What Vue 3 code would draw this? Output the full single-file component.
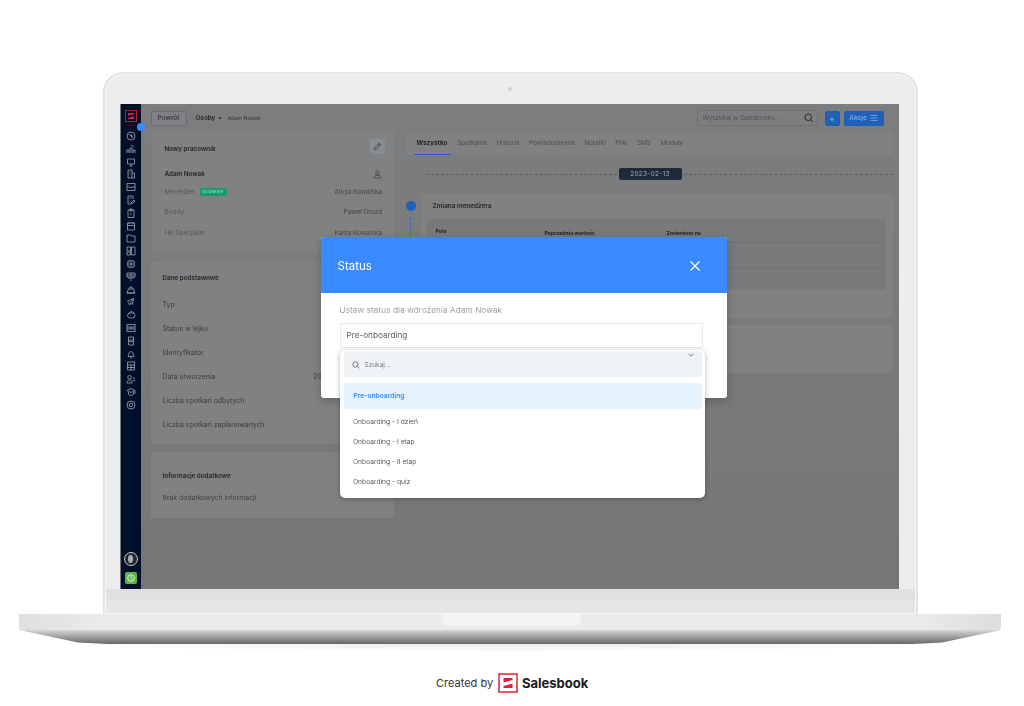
<script setup>
const navIcons = [
  'M5 1a4 4 0 1 0 0 8 4 4 0 0 0 0-8M3 3l4 4M5 3v2h2',
  'M1 9V6h2v3M4 9V4h2v5M7 9V6h2v3M5 1l3 2',
  'M1.5 2h7v5h-7zM5 7v2M3.5 9h3',
  'M2 1h4v8H2zM6 4h2.5v5H6M3.5 3h1M3.5 5h1',
  'M1 1.5h8v7H1zM1 5h3l1 1 1-1h3',
  'M2 1h5v3M2 1v8h3M6 9l3-3-1-1-3 3zM3.5 3h2',
  'M2 2h6v7.500H2zM4 1h2v2H4zM4 6h2',
  'M1.500 2h7v7h-7zM1.500 4.500h7M3 1v2M7 1v2',
  'M1 2h3l1 1h4v6H1z',
  'M1 1h3.500v4H1zM5.500 1H9v8H5.500zM1 6h3.500v3H1z',
  'M2 2h6v6H2zM1 4h1M8 4h1M1 6h1M8 6h1M4 1v1M6 1v1M4 8v1M6 8v1M4 4h2v2H4z',
  'M1 1h8v4H1zM5 1v8M1 3h8M3 5v2M7 5v2',
  'M1 8l1.500-4h5L9 8zM3 4l1-2h2l1 2M1 8h8',
  'M1.500 4l6-2.500-1 6-2-1.500-1 2-1-2.500zM4.500 5.500l3-4',
  'M1.500 6a3 3 0 0 1 3-3h2a2.500 2.500 0 0 1 0 5h-2a3 3 0 0 1-3-2M3 3a3 3 0 0 1 5 0',
  'M1 1.500h8v7H1zM1 4h8M1 6h8M3.500 5h3',
  'M2.500 1h5v3h-5zM2.500 5.500h5v3.500h-5zM2.500 4v1.500M7.500 4v1.500',
  'M2 7.500c1-1 .5-5 3-5s2 4 3 5zM4 9h2',
  'M1.500 1h7v8h-7zM1.500 4h7M1.500 6.500h7M5 4v5',
  'M3.500 1.500a1.800 1.800 0 1 0 .1 3.600 1.800 1.800 0 0 0-.1-3.600M1 9c0-2 1-3 2.500-3S6 7 6 9zM7 4h2M7 6.500h2',
  'M1 3.500l4-2 4 2-4 2zM2.500 5v2.500c1.500 1 3.500 1 5 0V5M9 3.500V7',
  'M5 3.200a1.800 1.800 0 1 0 0 3.600 1.800 1.800 0 0 0 0-3.600M5 1a4 4 0 1 0 0 8 4 4 0 0 0 0-8'
]
const tabs = ['Spotkania', 'Historia', 'Powiadomienia', 'Notatki', 'Pliki', 'SMS', 'Moduły']
const people = [
  { label: 'Buddy', value: 'Paweł Drozd' },
  { label: 'HR Specjalist', value: 'Kasia Kowalska' }
]
const basics = [
  { label: 'Typ', value: '' },
  { label: 'Status w lejku', value: '' },
  { label: 'Identyfikator', value: '' },
  { label: 'Data utworzenia', value: '2023-02-13 10:24:00' },
  { label: 'Liczba spotkań odbytych', value: '' },
  { label: 'Liczba spotkań zaplanowanych', value: '' }
]
const options = ['Onboarding - I dzień', 'Onboarding - I etap', 'Onboarding - II etap', 'Onboarding - quiz']
</script>

<template>
  <div class="page">
    <div class="laptop">
      <div class="lid">
        <span class="camera"></span>
        <div class="screen">
          <aside class="sidebar">
            <svg class="logo" viewBox="0 0 12 12">
              <rect x=".5" y=".5" width="11" height="11" fill="#00102a" stroke="#c2182b" />
              <path d="M3 3H9V4.300L3 5.800zM9 6.200V9H3V7.700z" fill="#d8203a" />
            </svg>
            <span class="collapse"></span>
            <div class="nav">
              <svg v-for="(d, i) in navIcons" :key="i" class="nav-icon" viewBox="0 0 10 10">
                <path :d="d" fill="none" stroke="#9ea4ad" stroke-width=".8" />
              </svg>
            </div>
            <div class="avatar"><span class="avatar-head"></span></div>
            <div class="clock">
              <svg class="clock-icon" viewBox="0 0 12 12" width="12" height="12">
                <circle cx="6" cy="6" r="3.300" fill="none" stroke="#e4f5da" stroke-width="1" />
                <path d="M6 4v2.200l1.300.8" fill="none" stroke="#e4f5da" stroke-width=".8" />
              </svg>
            </div>
          </aside>

          <main class="main">
            <header class="topbar">
              <button class="back">Powrót</button>
              <b class="crumb">Osoby</b>
              <span class="crumb-dot"></span>
              <span class="crumb-sub">Adam Nowak</span>
              <div class="search">
                <span>Wyszukaj w Salesbooku...</span>
                <svg viewBox="0 0 10 10" width="10" height="10">
                  <circle cx="4.300" cy="4.300" r="3.300" fill="none" stroke="#26282b" stroke-width="1" />
                  <path d="M6.800 6.800 9.200 9.200" stroke="#26282b" stroke-width="1" />
                </svg>
              </div>
              <button class="primary plus">+</button>
              <button class="primary actions">
                Akcje
                <svg viewBox="0 0 8 8" width="8" height="8">
                  <path d="M.5 1.500h7M.5 4h7M.5 6.500h7" stroke="#6f9bd8" stroke-width="1" />
                </svg>
              </button>
            </header>

            <div class="body">
              <div class="left">
                <section class="card c1">
                  <div class="c1-head">
                    <b class="title">Nowy pracownik</b>
                    <span class="edit">
                      <svg viewBox="0 0 10 10" width="9" height="9">
                        <path d="M1.500 8.500 2 6.200 6.800 1.400l1.800 1.800L3.800 8zM5.800 2.400l1.800 1.800" fill="none" stroke="#2b2d30" stroke-width=".8" />
                      </svg>
                    </span>
                  </div>
                  <div class="person">
                    <b class="title">Adam Nowak</b>
                    <svg viewBox="0 0 10 10" width="9" height="9">
                      <circle cx="5" cy="3" r="2" fill="none" stroke="#3d3f42" stroke-width=".9" />
                      <path d="M1.500 9V8c0-1.300 1-2 2-2h3c1 0 2 .7 2 2v1z" fill="none" stroke="#3d3f42" stroke-width=".9" />
                    </svg>
                  </div>
                  <div class="kv first">
                    <span class="muted">Menedżer</span>
                    <span class="tag">GŁÓWNY</span>
                    <span class="value">Alicja Kowalska</span>
                  </div>
                  <div v-for="p in people" :key="p.label" class="kv">
                    <span class="muted">{{ p.label }}</span>
                    <span class="value">{{ p.value }}</span>
                  </div>
                </section>

                <section class="card c2">
                  <b class="title">Dane podstawowe</b>
                  <div class="rows">
                    <div v-for="r in basics" :key="r.label" class="basic">
                      <span>{{ r.label }}</span>
                      <span class="basic-val">{{ r.value }}</span>
                    </div>
                  </div>
                </section>

                <section class="card c3">
                  <b class="title">Informacje dodatkowe</b>
                  <p class="none">Brak dodatkowych informacji</p>
                </section>
              </div>

              <div class="right">
                <nav class="tabs">
                  <span class="tab active">Wszystko</span>
                  <span v-for="t in tabs" :key="t" class="tab">{{ t }}</span>
                </nav>
                <div class="date-row">
                  <i class="dash dash-left"></i>
                  <span class="date">2023-02-13</span>
                  <i class="dash"></i>
                </div>
                <div class="timeline">
                  <div class="rail">
                    <span class="dot"></span>
                    <span class="dots"></span>
                  </div>
                  <div class="events">
                    <section class="event e1">
                      <b class="event-title">Zmiana menedżera</b>
                      <div class="table">
                        <div class="thead">
                          <b class="th-first">Pole</b>
                          <b>Poprzednia wartość</b>
                          <b>Zmieniono na</b>
                        </div>
                        <div class="tr"></div>
                        <div class="tr last"></div>
                      </div>
                    </section>
                    <section class="event e2"></section>
                  </div>
                </div>
              </div>
            </div>
          </main>

          <div class="modal">
            <div class="modal-head">
              <span>Status</span>
              <svg viewBox="0 0 10 10" width="10" height="10">
                <path d="M.5.5l9 9M9.500.5l-9 9" stroke="#fff" stroke-width="1.300" />
              </svg>
            </div>
            <div class="modal-body">
              <p class="hint">Ustaw status dla wdrożenia Adam Nowak</p>
              <div class="select">Pre-onboarding</div>
            </div>
            <div class="dropdown">
              <div class="dd-search">
                <svg viewBox="0 0 10 10" width="8" height="8">
                  <circle cx="4.300" cy="4.300" r="3.300" fill="none" stroke="#5f6670" stroke-width="1.100" />
                  <path d="M6.800 6.800 9.200 9.200" stroke="#5f6670" stroke-width="1.100" />
                </svg>
                <span>Szukaj...</span>
              </div>
              <svg class="chevron" viewBox="0 0 8 5" width="6" height="4">
                <path d="M.8.8 4 4 7.200.8" fill="none" stroke="#5f6670" stroke-width="1.100" />
              </svg>
              <div class="dd-selected">Pre-onboarding</div>
              <div v-for="o in options" :key="o" class="dd-option">{{ o }}</div>
            </div>
          </div>
        </div>
      </div>
      <div class="base"><span class="notch"></span></div>
      <div class="base-under"></div>
      <div class="base-shadow"></div>
    </div>

    <footer class="footer">
      <span class="created">Created by</span>
      <svg class="brand-mark" viewBox="0 0 20 20" width="20" height="20">
        <rect x="1" y="1" width="18" height="18" fill="#fff" stroke="#de2335" stroke-width="1.500" />
        <path d="M5.500 5H14.500V7L5.500 9.500zM14.500 10.500V15H5.500V13z" fill="#de2335" />
      </svg>
      <b class="brand">Salesbook</b>
    </footer>
  </div>
</template>

<style>
html, body { margin: 0; background: #fff; }
</style>

<style scoped>
* { box-sizing: border-box; }
p { margin: 0; }
button { font-family: inherit; padding: 0; cursor: pointer; }

.page {
  width: 1024px;
  height: 706px;
  overflow: hidden;
  padding-top: 72px;
  background: #fff;
  font-family: Inter, "Liberation Sans", sans-serif;
  color: #37393c;
}
.laptop { display: flex; flex-direction: column; align-items: center; width: 1020px; }

.lid {
  position: relative;
  flex: none;
  width: 815px;
  height: 542px;
  padding: 30px 15px 0;
  border: 2px solid #e3e4e6;
  border-bottom: 0;
  border-radius: 20px 20px 0 0;
  background: linear-gradient(#ecedef 0 515px, #dfe0e1 515px 526px, #e4e5e6 526px);
  box-shadow: inset 0 0 0 1px #f7f7f8;
}
.camera {
  position: absolute;
  top: 13px;
  left: 403px;
  width: 4px;
  height: 4px;
  border-radius: 50%;
  background: #cfd2d6;
}
.screen {
  position: relative;
  display: flex;
  width: 779px;
  height: 485px;
  background: #78797b;
  filter: blur(.3px);
}

.sidebar {
  position: relative;
  display: flex;
  flex: none;
  flex-direction: column;
  align-items: center;
  width: 20px;
  margin-left: 1px;
  padding-top: 6px;
  background: #00102a;
}
.logo { width: 12px; height: 12px; flex: none; }
.collapse {
  position: absolute;
  top: 19px;
  right: -4px;
  z-index: 2;
  width: 8px;
  height: 8px;
  border-radius: 50%;
  background: #3a8bff;
}
.nav {
  display: flex;
  flex-direction: column;
  gap: 2.800px;
  margin-top: 9px;
}
.nav-icon { display: block; width: 10px; height: 10px; }
.avatar {
  display: flex;
  align-items: center;
  justify-content: center;
  width: 14px;
  height: 14px;
  margin-top: auto;
  border: 1px solid #c9cbce;
  border-radius: 50%;
  background: #25282c;
}
.avatar-head { width: 5px; height: 8px; border-radius: 50%; background: #a9acb0; }
.clock {
  width: 12px;
  height: 12px;
  margin: 6px 0 5px;
  border-radius: 2px;
  background: #5db549;
}
.clock-icon { display: block; }

.main {
  flex: 1;
  display: flex;
  flex-direction: column;
  min-width: 0;
  padding: 6px 6px 0 10px;
  background: linear-gradient(#7c7d7f, #757678);
}
.topbar {
  display: flex;
  align-items: center;
  height: 16px;
  margin-bottom: 4px;
  padding-right: 9px;
}
.back {
  width: 36px;
  height: 15px;
  border: 1px solid #6b6d70;
  border-radius: 2px;
  background: #808184;
  color: #2e3033;
  font-size: 6.500px;
  font-weight: 500;
}
.crumb { margin-left: 9px; font-size: 6.300px; font-weight: 700; color: #2b2d30; }
.crumb-dot {
  width: 2px;
  height: 2px;
  margin: 0 6px 0 4px;
  border-radius: 50%;
  background: #232527;
}
.crumb-sub { font-size: 5.300px; color: #37393c; }
.search {
  display: flex;
  align-items: center;
  justify-content: space-between;
  width: 121px;
  height: 16px;
  margin-left: auto;
  padding: 0 3px 0 5px;
  border: 1px solid #6f7073;
  border-radius: 2px;
  background: #7d7e80;
  color: #4d4f52;
  font-size: 6.300px;
}
.primary {
  height: 15px;
  border: 1px solid #1e5db3;
  border-radius: 2px;
  background: #1f60b8;
  color: #7ea6de;
}
.plus { width: 15px; margin-left: 7px; font-size: 10px; line-height: 12px; }
.actions {
  display: flex;
  align-items: center;
  justify-content: center;
  gap: 3px;
  width: 40px;
  margin-left: 4px;
  font-size: 6.500px;
  font-weight: 600;
}

.body { display: flex; flex: 1; min-height: 0; }
.left {
  display: flex;
  flex: none;
  flex-direction: column;
  gap: 8px;
  width: 243px;
}
.card { background: #808182; border-radius: 2px; }
.title { display: block; font-size: 6.250px; font-weight: 700; line-height: 10px; color: #2b2d30; }
.c1 { width: 242px; height: 123px; margin-left: 1px; padding: 9px 8.500px 0 13px; }
.c1-head { display: flex; align-items: center; justify-content: space-between; height: 15px; }
.c1-head .title { margin-top: 5px; }
.edit {
  display: flex;
  align-items: center;
  justify-content: center;
  width: 15px;
  height: 15px;
  border-radius: 2px;
  background: #888d93;
}
.person {
  display: flex;
  align-items: center;
  justify-content: space-between;
  height: 10px;
  margin-top: 15px;
  padding-right: 3px;
}
.kv {
  display: flex;
  align-items: center;
  height: 21px;
  padding-right: 3px;
  font-size: 6.500px;
}
.kv.first { height: 14px; margin-top: 6px; margin-bottom: 2px; }
.muted { color: #54565a; }
.value { margin-left: auto; color: #44464a; }
.tag {
  margin-left: 4px;
  padding: 0 2.500px;
  border-radius: 1px;
  background: #1c9a6e;
  color: #7fd8b6;
  font-size: 4px;
  font-weight: 700;
  letter-spacing: .6px;
  line-height: 8px;
}
.c2 { height: 183px; padding: 12px 11px 0 12px; }
.rows { margin-top: 9px; }
.basic {
  display: flex;
  align-items: center;
  justify-content: space-between;
  height: 24px;
  font-size: 6.900px;
  color: #3a3c3f;
}
.basic-val { white-space: nowrap; }
.c3 { height: 66px; padding: 19px 0 0 12px; }
.none { margin-top: 12px; font-size: 6.850px; line-height: 10px; color: #3f4144; }

.right { flex: 1; min-width: 0; padding-left: 12px; padding-top: 2px; }
.tabs {
  display: flex;
  align-items: center;
  gap: 9.500px;
  height: 23px;
  padding-left: 11px;
  background: #808182;
  border-radius: 2px;
  font-size: 6.400px;
  color: #4b4d50;
}
.tab { position: relative; line-height: 23px; }
.tab.active { color: #232528; font-weight: 700; }
.tab.active::after {
  content: "";
  position: absolute;
  left: -3px;
  right: -4px;
  bottom: 0;
  height: 1px;
  background: #1f60b8;
}
.date-row {
  display: flex;
  align-items: center;
  gap: 2px;
  height: 12px;
  margin: 13px 0 14px 20px;
}
.dash { flex: 1; border-top: 1px dashed #5d5f62; }
.dash-left { flex: none; width: 191px; }
.date {
  flex: none;
  width: 63px;
  height: 12px;
  border-radius: 2px;
  background: #1e2a39;
  color: #a9adb3;
  font-size: 6.500px;
  line-height: 12px;
  text-align: center;
  letter-spacing: .3px;
}
.timeline { display: flex; }
.rail { display: flex; flex: none; flex-direction: column; width: 15px; padding-top: 7px; }
.dot { width: 10px; height: 10px; border-radius: 50%; background: #1f60b8; }
.dots { width: 0; height: 60px; margin: 7px 0 0 4px; border-left: 1px dotted #1f60b8; }
.events { flex: 1; display: flex; flex-direction: column; gap: 7px; }
.event { background: #808182; border-radius: 2px; }
.e1 { height: 124px; padding: 0 7px 0 6px; }
.e2 { height: 48px; }
.event-title { display: block; height: 25px; padding-left: 6px; font-size: 6.300px; line-height: 25px; color: #2b2d30; }
.table { height: 71px; padding: 0 5px; border-radius: 2px; background: #78797a; }
.thead {
  display: grid;
  grid-template-columns: 109px 122px 1fr;
  align-items: center;
  height: 24px;
  padding: 4px 0 0 4px;
  border-bottom: 1px solid #6e6f71;
  font-size: 5.200px;
  color: #1f2123;
}
.th-first { margin-top: -4px; }
.tr { height: 26px; border-bottom: 1px solid #6e6f71; }
.tr.last { border: 0; }

.modal {
  position: absolute;
  left: 201px;
  top: 133px;
  z-index: 3;
  width: 406px;
  height: 161px;
  border-radius: 3px;
  background: #fff;
  box-shadow: 0 3px 8px rgba(0, 0, 0, .22);
}
.modal-head {
  display: flex;
  align-items: center;
  justify-content: space-between;
  height: 56px;
  padding: 2px 27px 0 17px;
  border-radius: 3px 3px 0 0;
  background: #398aff;
  color: #fff;
  font-size: 11.500px;
  font-weight: 400;
}
.modal-body { padding: 11px 24px 0 19px; }
.hint { font-size: 8.100px; line-height: 12px; letter-spacing: .12px; color: #9b9fa5; }
.select {
  height: 25px;
  margin-top: 7px;
  padding-left: 6px;
  border: 1.500px solid #e9eaeb;
  font-size: 8.200px;
  line-height: 22px;
  color: #5b5e64;
}
.dropdown {
  position: absolute;
  left: 19px;
  top: 113px;
  width: 365px;
  height: 148px;
  padding: 1px 3px 0 4px;
  border-radius: 5px;
  background: #fff;
  box-shadow: 0 1px 5px rgba(0, 0, 0, .3);
}
.dd-search {
  display: flex;
  align-items: center;
  gap: 5px;
  height: 26px;
  padding: 2px 0 0 8px;
  border-radius: 2px;
  background: #f0f3f6;
  font-size: 6.500px;
  color: #7d8086;
}
.chevron { position: absolute; top: 3px; right: 11px; }
.dd-selected {
  height: 26px;
  margin: 6px 0 2.500px;
  padding-left: 10px;
  border-radius: 2px;
  background: #e3f2fd;
  color: #3a8bff;
  font-size: 6.700px;
  font-weight: 600;
  line-height: 27px;
}
.dd-option {
  height: 20px;
  padding-left: 9.500px;
  font-size: 6.700px;
  line-height: 20px;
  color: #54575d;
}

.base {
  flex: none;
  display: flex;
  justify-content: center;
  width: 982px;
  height: 16px;
  padding-left: 3px;
  border-radius: 0 0 2px 2px;
  background: linear-gradient(90deg, #dedfe1, #e9eaeb 8%, #e9eaeb 92%, #dcdddf);
}
.notch {
  width: 139px;
  height: 12px;
  border-radius: 0 0 7px 7px;
  background: #f3f4f5;
}
.base-under {
  flex: none;
  width: 982px;
  height: 14px;
  background: linear-gradient(#d6d6d8, #66676a);
  clip-path: polygon(0 0, 100% 0, 94% 90%, 91% 100%, 9% 100%, 6% 90%);
}
.base-shadow {
  flex: none;
  width: 900px;
  height: 8px;
  background: radial-gradient(ellipse 50% 100% at 50% 0, #e9eaea, #fff);
}

.footer {
  display: flex;
  align-items: center;
  height: 20px;
  margin-top: 21px;
  padding-left: 436px;
}
.created { flex: none; width: 62px; font-size: 11px; color: #333; white-space: nowrap; }
.brand-mark { flex: none; }
.brand { margin-left: 4px; font-size: 13px; font-weight: 700; color: #1c1c1c; }
</style>
